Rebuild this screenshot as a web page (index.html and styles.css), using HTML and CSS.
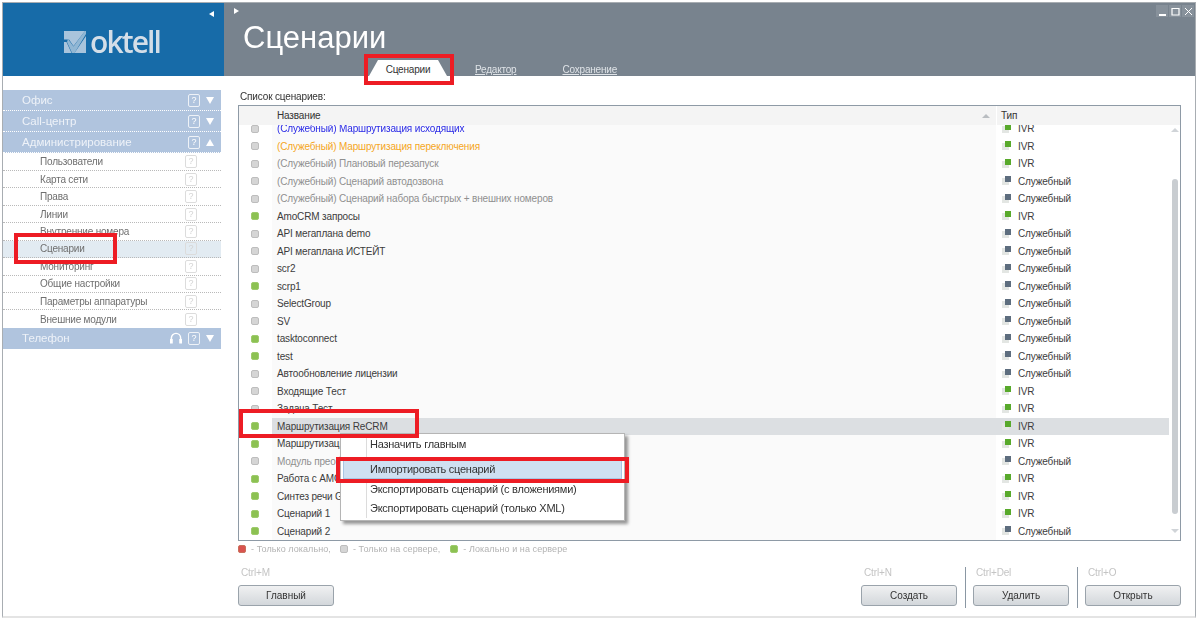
FILE: index.html
```html
<!DOCTYPE html>
<html lang="ru">
<head>
<meta charset="utf-8">
<title>Oktell</title>
<link rel="stylesheet" href="styles.css">
</head>
<body>
<div class="window">
  <header class="header">
    <div class="brand">
      <span class="arrow-left"></span>
      <div class="logo">
        <svg class="logo-mark" width="22" height="22" viewBox="0 0 22 22"><path fill="#a9c4dc" d="M0 0h21L9.500 15 5 8.500H0zM0 11h2.500l5 11H0zM22 5v17H10.500z"/><path fill="#e3eaf1" d="M4 8l5.500 7.500L21 0h1v3L10.500 22H8L3 11z" opacity=".6"/></svg>
        <span class="logo-text">oktell</span>
      </div>
    </div>
    <div class="head-main">
      <div class="winbar">
        <span class="arrow-right"></span>
        <div class="winbtns">
          <span class="winbtn"><svg width="9" height="9" viewBox="0 0 9 9"><path fill="#fff" d="M1 7h7v2H1z"/></svg></span>
          <span class="winbtn"><svg width="9" height="9" viewBox="0 0 9 9"><path fill="none" stroke="#fff" stroke-width="1.2" d="M1 1.500h7v6.500H1z"/></svg></span>
          <span class="winbtn"><svg width="9" height="9" viewBox="0 0 9 9"><path fill="none" stroke="#fff" d="M1 1l7 7M8 1L1 8"/></svg></span>
        </div>
      </div>
      <h1 class="title">Сценарии</h1>
      <nav class="tabs">
        <span class="tab active">Сценарии</span>
        <a class="tab link">Редактор</a>
        <a class="tab link">Сохранение</a>
      </nav>
    </div>
  </header>
  <div class="content">
    <aside class="sidebar">
      <div class="group"><span class="g-name">Офис</span><span class="help">?</span><span class="tri down"></span></div>
      <div class="group"><span class="g-name">Call-центр</span><span class="help">?</span><span class="tri down"></span></div>
      <div class="group"><span class="g-name">Администрирование</span><span class="help">?</span><span class="tri up"></span></div>
      <ul class="items">
        <li class="item"><span>Пользователи</span><span class="help pale">?</span></li>
        <li class="item"><span>Карта сети</span><span class="help pale">?</span></li>
        <li class="item"><span>Права</span><span class="help pale">?</span></li>
        <li class="item"><span>Линии</span><span class="help pale">?</span></li>
        <li class="item"><span>Внутренние номера</span><span class="help pale">?</span></li>
        <li class="item current"><span>Сценарии</span><span class="help pale">?</span></li>
        <li class="item"><span>Мониторинг</span><span class="help pale">?</span></li>
        <li class="item"><span>Общие настройки</span><span class="help pale">?</span></li>
        <li class="item"><span>Параметры аппаратуры</span><span class="help pale">?</span></li>
        <li class="item"><span>Внешние модули</span><span class="help pale">?</span></li>
      </ul>
      <div class="group last"><span class="g-name">Телефон</span>
        <svg class="phones" width="12" height="12" viewBox="0 0 13 12"><path fill="none" stroke="#fff" stroke-width="1.600" d="M1.500 9V6a5 5 0 0 1 10 0v3"/><path fill="#fff" d="M0 7h3v5H0zM10 7h3v5h-3z"/></svg>
        <span class="help">?</span><span class="tri down"></span></div>
    </aside>
    <main class="main">
      <div class="list-label">Список сценариев:</div>
      <div class="table">
        <div class="thead">
          <div class="th-dot"></div>
          <div class="th-name"><span>Название</span><span class="sort"></span></div>
          <div class="th-type">Тип</div>
        </div>
        <div class="tbody">
          <div class="rows">
            <div class="row"><span class="c-dot"><i class="dot gray"></i></span><span class="c-name blue">(Служебный) Маршрутизация исходящих</span><span class="c-type"><i class="tp ivr"></i>IVR</span></div>
            <div class="row"><span class="c-dot"><i class="dot gray"></i></span><span class="c-name orange">(Служебный) Маршрутизация переключения</span><span class="c-type"><i class="tp ivr"></i>IVR</span></div>
            <div class="row"><span class="c-dot"><i class="dot gray"></i></span><span class="c-name muted">(Служебный) Плановый перезапуск</span><span class="c-type"><i class="tp ivr"></i>IVR</span></div>
            <div class="row"><span class="c-dot"><i class="dot gray"></i></span><span class="c-name muted">(Служебный) Сценарий автодозвона</span><span class="c-type"><i class="tp srv"></i>Служебный</span></div>
            <div class="row"><span class="c-dot"><i class="dot gray"></i></span><span class="c-name muted">(Служебный) Сценарий набора быстрых + внешних номеров</span><span class="c-type"><i class="tp srv"></i>Служебный</span></div>
            <div class="row"><span class="c-dot"><i class="dot green"></i></span><span class="c-name">AmoCRM запросы</span><span class="c-type"><i class="tp ivr"></i>IVR</span></div>
            <div class="row"><span class="c-dot"><i class="dot gray"></i></span><span class="c-name">API мегаплана demo</span><span class="c-type"><i class="tp srv"></i>Служебный</span></div>
            <div class="row"><span class="c-dot"><i class="dot gray"></i></span><span class="c-name">API мегаплана ИСТЕЙТ</span><span class="c-type"><i class="tp srv"></i>Служебный</span></div>
            <div class="row"><span class="c-dot"><i class="dot gray"></i></span><span class="c-name">scr2</span><span class="c-type"><i class="tp srv"></i>Служебный</span></div>
            <div class="row"><span class="c-dot"><i class="dot green"></i></span><span class="c-name">scrp1</span><span class="c-type"><i class="tp srv"></i>Служебный</span></div>
            <div class="row"><span class="c-dot"><i class="dot gray"></i></span><span class="c-name">SelectGroup</span><span class="c-type"><i class="tp srv"></i>Служебный</span></div>
            <div class="row"><span class="c-dot"><i class="dot gray"></i></span><span class="c-name">SV</span><span class="c-type"><i class="tp srv"></i>Служебный</span></div>
            <div class="row"><span class="c-dot"><i class="dot green"></i></span><span class="c-name">tasktoconnect</span><span class="c-type"><i class="tp srv"></i>Служебный</span></div>
            <div class="row"><span class="c-dot"><i class="dot green"></i></span><span class="c-name">test</span><span class="c-type"><i class="tp srv"></i>Служебный</span></div>
            <div class="row"><span class="c-dot"><i class="dot gray"></i></span><span class="c-name">Автообновление лицензии</span><span class="c-type"><i class="tp srv"></i>Служебный</span></div>
            <div class="row"><span class="c-dot"><i class="dot gray"></i></span><span class="c-name">Входящие Тест</span><span class="c-type"><i class="tp ivr"></i>IVR</span></div>
            <div class="row"><span class="c-dot"><i class="dot gray"></i></span><span class="c-name">Задача Тест</span><span class="c-type"><i class="tp ivr"></i>IVR</span></div>
            <div class="row selected"><span class="c-dot"><i class="dot green"></i></span><span class="c-name">Маршрутизация ReCRM</span><span class="c-type"><i class="tp ivr"></i>IVR</span></div>
            <div class="row"><span class="c-dot"><i class="dot green"></i></span><span class="c-name">Маршрутизация</span><span class="c-type"><i class="tp ivr"></i>IVR</span></div>
            <div class="row"><span class="c-dot"><i class="dot gray"></i></span><span class="c-name muted">Модуль преобразования</span><span class="c-type"><i class="tp srv"></i>Служебный</span></div>
            <div class="row"><span class="c-dot"><i class="dot green"></i></span><span class="c-name">Работа с АМО</span><span class="c-type"><i class="tp ivr"></i>IVR</span></div>
            <div class="row"><span class="c-dot"><i class="dot green"></i></span><span class="c-name">Синтез речи Google</span><span class="c-type"><i class="tp ivr"></i>IVR</span></div>
            <div class="row"><span class="c-dot"><i class="dot green"></i></span><span class="c-name">Сценарий 1</span><span class="c-type"><i class="tp ivr"></i>IVR</span></div>
            <div class="row"><span class="c-dot"><i class="dot green"></i></span><span class="c-name">Сценарий 2</span><span class="c-type"><i class="tp srv"></i>Служебный</span></div>
          </div>
          <div class="scrollbar">
            <span class="sb-up"></span>
            <span class="sb-thumb"></span>
            <span class="sb-down"></span>
          </div>
        </div>
      </div>
      <div class="legend">
        <span class="lg"><i class="dot red"></i>- Только локально,</span>
        <span class="lg"><i class="dot gray"></i>- Только на сервере,</span>
        <span class="lg"><i class="dot green"></i>- Локально и на сервере</span>
      </div>
      <div class="actions">
        <div class="action"><span class="hotkey">Ctrl+M</span><button class="btn">Главный</button></div>
        <div class="spacer"></div>
        <div class="action"><span class="hotkey">Ctrl+N</span><button class="btn">Создать</button></div>
        <div class="sep"></div>
        <div class="action"><span class="hotkey">Ctrl+Del</span><button class="btn">Удалить</button></div>
        <div class="sep"></div>
        <div class="action"><span class="hotkey">Ctrl+O</span><button class="btn">Открыть</button></div>
      </div>
    </main>
  </div>
</div>
<div class="menu">
  <div class="mi">Назначить главным</div>
  <div class="mi-sep"></div>
  <div class="mi hover">Импортировать сценарий</div>
  <div class="mi">Экспортировать сценарий (с вложениями)</div>
  <div class="mi">Экспортировать сценарий (только XML)</div>
</div>
<div class="mark mark-tab"></div>
<div class="mark mark-side"></div>
<div class="mark mark-row"></div>
<div class="mark mark-import"></div>
</body>
</html>
```
FILE: styles.css
```css
* { box-sizing: border-box; }
html, body { margin: 0; height: 100%; background: #fff; overflow: hidden; }
body { font-family: "Liberation Sans", Arial, sans-serif; font-size: 10px; letter-spacing: -.15px; color: #3a3a3a; position: relative; }

.window {
  margin: 2px 0 0 2px;
  width: 1194px;
  height: 616px;
  border: 1px solid #a8adb2;
  border-bottom-color: #e4e4e4;
  border-bottom-width: 2px;
  display: flex;
  flex-direction: column;
  filter: blur(.35px);
}

/* header */
.header { display: flex; height: 73px; flex: none; }
.brand { width: 221px; background: #176ba8; position: relative; display: flex; align-items: center; justify-content: center; padding: 4px 3px 0 0; }
.arrow-left { position: absolute; left: 206px; top: 8px; border: 3px solid transparent; border-right: 5px solid #fff; border-left: 0; }
.logo { display: flex; align-items: center; gap: 4px; }
.logo-mark { display: block; }
.logo-text { font-family: "Open Sans", sans-serif; font-weight: 600; font-size: 30px; line-height: 30px; letter-spacing: -1.9px; color: #d4dee8; }
.head-main { flex: 1; background: #78838e; display: flex; flex-direction: column; padding-left: 19px; }
.winbar { display: flex; justify-content: space-between; align-items: flex-start; height: 17px; }
.arrow-right { margin: 5px 0 0 -9px; border: 3px solid transparent; border-left: 5px solid #fff; border-right: 0; }
.winbtns { display: flex; gap: 1px; margin: 2px 1px 0 0; }
.winbtn { width: 12px; height: 12px; background: #87919b; display: flex; align-items: center; justify-content: center; }
.title { margin: 0; font-weight: 400; font-size: 31px; letter-spacing: 0; line-height: 36px; color: #fff; height: 36px; }
.tabs { display: flex; align-items: flex-end; height: 20px; margin-left: 126px; }
.tab { font-size: 10px; letter-spacing: -.2px; display: block; }
.tab.active { width: 78px; height: 16px; line-height: 19px; text-align: center; background: #fff; color: #333; clip-path: polygon(9px 0, 69px 0, 78px 100%, 0 100%); }
.tab.link { color: #dfe3e7; text-decoration: underline; line-height: 17px; height: 15px; }
.tab.link:nth-child(2) { margin-left: 28px; }
.tab.link:nth-child(3) { margin-left: 46px; }

/* body */
.content { flex: 1; display: flex; min-height: 0; }
.sidebar { width: 218px; flex: none; padding-top: 14px; margin-right: 17px; }
.group { height: 21px; background: #b0c4de; display: flex; align-items: center; padding-left: 19px; color: #eef2f8; font-size: 11.5px; letter-spacing: 0; border-bottom: 1px dotted #fff; }
.group.last { border-bottom: 0; height: 21px; }
.g-name { flex: 1; }
.help { width: 12px; height: 13px; border: 1px solid #eef2f7; border-radius: 2px; font-size: 9px; line-height: 11px; text-align: center; color: #fff; margin-right: 6px; flex: none; }
.help.pale { border-color: #dcdcdc; color: #d4d4d4; margin-right: 24px; }
.tri { width: 0; height: 0; border-left: 4.5px solid transparent; border-right: 4.5px solid transparent; margin-right: 7px; flex: none; }
.tri.down { border-top: 7px solid #fff; }
.tri.up { border-bottom: 7px solid #fff; }
.phones { margin-right: 6px; flex: none; }
.items { list-style: none; margin: 0; padding: .5px 0 0; }
.item { height: 17.45px; display: flex; align-items: center; justify-content: space-between; padding-left: 37px; color: #6f6f6f; font-size: 10px; letter-spacing: -.2px; border-bottom: 1px dotted #b9b9b9; }
.item:last-child { border-bottom: 0; }
.item.current { background: #e2ebf2; }
.main { flex: 1; display: flex; flex-direction: column; min-width: 0; }
.list-label { height: 15px; margin-top: 14px; padding-left: 2px; font-size: 10px; line-height: 13px; color: #333; }
.table { height: 436px; border: 1px solid #8e9aa6; display: flex; flex-direction: column; flex: none; overflow: hidden; width: 943px; }
.thead { display: flex; height: 19px; flex: none; background: #f4f4f4; position: relative; z-index: 1; font-size: 10px; line-height: 19px; color: #333; }
.th-dot { width: 33px; }
.th-name { width: 724px; padding-left: 5px; display: flex; justify-content: space-between; align-items: center; padding-right: 6px; }
.sort { border: 4px solid transparent; border-bottom: 4px solid #b9bdc1; border-top: 0; }
.th-type { flex: 1; padding-left: 4px; border-left: 1px solid #fff; }
.tbody { display: flex; flex: 1; min-height: 0; }
.rows { flex: 1; margin-top: -5px; min-width: 0; }
.row { display: flex; height: 17.5px; line-height: 17.5px; align-items: stretch; color: #3c3c3c; }
.c-dot { width: 33px; display: flex; align-items: center; justify-content: center; flex: none; padding-right: 1px; }
.c-name { width: 724px; flex: none; background: #fafafa; padding-left: 5px; white-space: nowrap; overflow: hidden; }
.c-type { flex: 1; display: flex; align-items: center; background: #fff; padding-left: 6px; }
.row.selected .c-name, .row.selected .c-type { background: #dcdfe2; }
.blue { color: #2a2ae6; }
.orange { color: #f5a623; }
.muted { color: #8f8f8f; }
.dot { display: inline-block; width: 8px; height: 8px; border-radius: 2px; flex: none; }
.dot.gray { background: #d5d5d5; border: 1px solid #bdbdbd; }
.dot.green { background: #8cc152; border: 1px solid #9ecb6c; }
.dot.red { background: #d9534f; border: 1px solid #c9705c; }
.tp { width: 10px; height: 10px; margin-right: 6px; flex: none; position: relative; }
.tp::before { content: ""; position: absolute; left: 0; top: 2px; width: 7px; height: 7px; background: #e3e6e3; }
.tp::after { content: ""; position: absolute; left: 3px; top: 0; width: 6px; height: 6px; }
.tp.ivr::after { background: #58a92b; }
.tp.srv::after { background: #5d6d7e; }
.scrollbar { width: 11px; flex: none; background: #fff; display: flex; flex-direction: column; align-items: center; position: relative; }
.sb-up { margin-top: 3px; border: 4px solid transparent; border-bottom: 4px solid #d0d4d8; border-top: 0; }
.sb-thumb { width: 6px; height: 335px; margin-top: 47px; background: #c9cdd1; border-radius: 3px; }
.sb-down { margin-top: 15px; border: 4px solid transparent; border-top: 4px solid #d0d4d8; border-bottom: 0; }
.legend { display: flex; height: 16px; align-items: center; color: #b3b3b3; font-size: 9px; letter-spacing: .08px; }
.lg { display: flex; align-items: center; }
.lg .dot { margin-right: 5px; }
.lg:nth-child(2) { margin-left: 9px; }
.lg:nth-child(3) { margin-left: 10px; }
.actions { display: flex; margin-top: 10px; align-items: stretch; width: 943px; }
.action { display: flex; flex-direction: column; width: 96px; }
.hotkey { height: 18px; padding-left: 3px; color: #c4c4c4; font-size: 10px; line-height: 12px; }
.btn { height: 21px; padding: 0; border: 1px solid #9aa3ab; border-radius: 3px; background: linear-gradient(#f0f1f2, #d3d7db); font: 10px "Liberation Sans", Arial, sans-serif; color: #333; }
.spacer { flex: 1; }
.sep { width: 1px; height: 41px; background: #8a97a3; margin: 0 7.5px; }

/* context menu */
.menu { position: absolute; left: 340px; top: 433px; width: 285px; height: 88px; background: #fff; border: 1px solid #b5b5b5; box-shadow: 3px 3px 3px rgba(0,0,0,.4); padding: 1px 2px; filter: blur(.35px); }
.menu::before { content: ""; position: absolute; left: 25px; top: 2px; bottom: 2px; width: 1px; background: #dcdcdc; }
.mi { height: 19px; line-height: 19px; padding-left: 27px; font-size: 11px; letter-spacing: -.25px; color: #333; position: relative; }
.mi-sep { height: 6px; }
.mi.hover { background: #cfe0f1; outline: 1px solid #a8c6e4; outline-offset: -1px; margin-bottom: 1px; }

/* annotation frames */
.mark { position: absolute; border: 4px solid #ed1c24; filter: blur(.35px); }
.mark-tab { left: 364px; top: 54px; width: 90px; height: 31px; }
.mark-side { left: 14px; top: 233px; width: 103px; height: 31px; }
.mark-row { left: 239px; top: 409px; width: 180px; height: 29px; }
.mark-import { left: 336px; top: 457px; width: 293px; height: 26px; }
```
